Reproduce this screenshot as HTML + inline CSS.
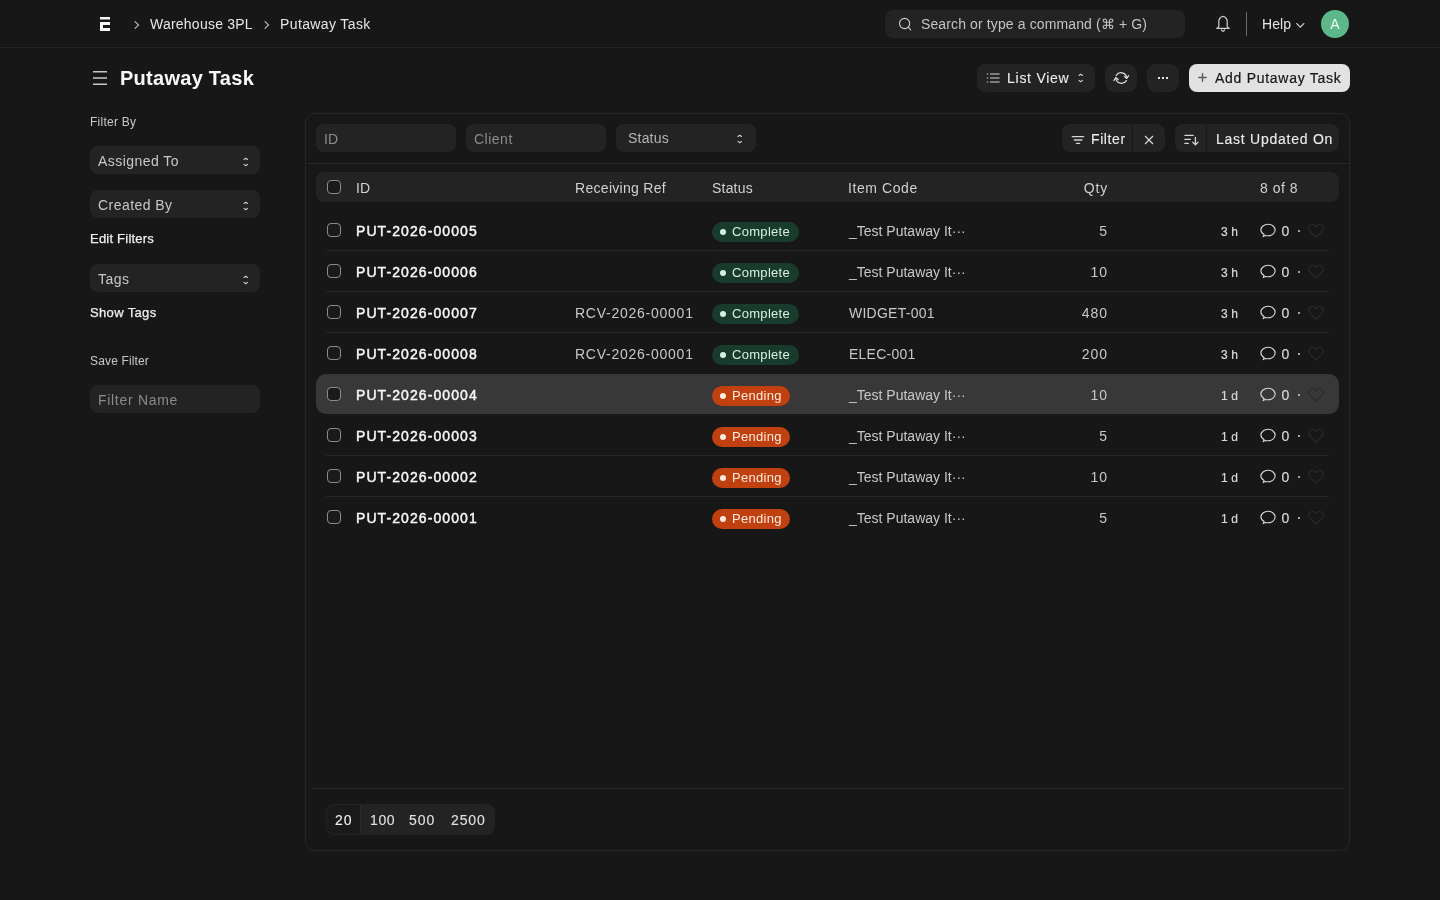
<!DOCTYPE html>
<html><head><meta charset="utf-8">
<style>
*{box-sizing:border-box;margin:0;padding:0}
html,body{width:1440px;height:900px;overflow:hidden;background:#171717;font-family:"Liberation Sans",sans-serif;color:#f0f0f0}
.a{position:absolute}
.t{position:absolute;white-space:nowrap;line-height:1}
svg{position:absolute;overflow:visible}
</style></head><body><div style="position:absolute;left:0;top:0;width:1440px;height:900px;will-change:transform;background:#171717">
<div class="a" style="left:0px;top:47px;width:1440px;height:1px;background:#242424;"></div>
<svg style="left:100px;top:17px" width="10" height="14" viewBox="0 0 10 14"><rect x="0" y="0" width="10" height="2.5" fill="#f5f5f5"/><path d="M0 5H10V8H3V11H10V14H0Z" fill="#f5f5f5"/></svg>
<svg style="left:134px;top:21px" width="6" height="8" viewBox="0 0 6 8"><path d="M1 0.6L4.6 4L1 7.4" stroke="#bdbdbd" stroke-width="1.1" fill="none" stroke-linecap="round"/></svg>
<div class="t" style="left:150px;top:17px;font-size:14px;color:#e6e6e6;letter-spacing:0.23px;">Warehouse 3PL</div>
<svg style="left:264px;top:21px" width="6" height="8" viewBox="0 0 6 8"><path d="M1 0.6L4.6 4L1 7.4" stroke="#bdbdbd" stroke-width="1.1" fill="none" stroke-linecap="round"/></svg>
<div class="t" style="left:280px;top:17px;font-size:14px;color:#e6e6e6;letter-spacing:0.38px;">Putaway Task</div>
<div class="a" style="left:885px;top:10px;width:300px;height:28px;background:#232323;border-radius:8px;"></div>
<svg style="left:898px;top:17px" width="14" height="14" viewBox="0 0 14 14"><circle cx="6.6" cy="6.5" r="5.1" stroke="#cccccc" stroke-width="1.1" fill="none"/><path d="M10.3 10.2L12.7 12.8" stroke="#cccccc" stroke-width="1.1" stroke-linecap="round"/></svg>
<div class="t" style="left:921px;top:17px;font-size:14px;color:#c4c4c4;letter-spacing:0.12px;">Search or type a command (⌘ + G)</div>
<svg style="left:1215px;top:15px" width="16" height="18" viewBox="0 0 16 18"><path d="M8 1.3C7.2 1.3 5.2 2.6 4.6 3.6C4 4.6 3.8 5.6 3.8 6.8V11.6L1.8 13.4H14.2L12.2 11.6V6.8C12.2 5.6 12 4.6 11.4 3.6C10.8 2.6 8.8 1.3 8 1.3Z" stroke="#cfcfcf" stroke-width="1.2" fill="none" stroke-linejoin="round"/><path d="M6.4 14.4C6.6 15.6 7.2 16.3 8 16.3C8.8 16.3 9.4 15.6 9.6 14.4" stroke="#cfcfcf" stroke-width="1.2" fill="none"/></svg>
<div class="a" style="left:1246px;top:12px;width:1px;height:24px;background:#6b6b6b;"></div>
<div class="t" style="left:1262px;top:17px;font-size:14px;color:#e6e6e6;letter-spacing:0.1px;">Help</div>
<svg style="left:1296px;top:22px" width="9" height="6" viewBox="0 0 9 6"><path d="M0.7 1.5L4.3 5.2L7.9 1.5" stroke="#c8c8c8" stroke-width="1.1" fill="none" stroke-linecap="round"/></svg>
<div class="a" style="left:1321px;top:10px;width:28px;height:28px;background:#5cb88a;border-radius:14px;"></div>
<div class="t" style="left:1321px;top:17px;width:28px;text-align:center;font-size:14px;color:#f2fff6">A</div>
<svg style="left:93px;top:71px" width="14" height="14" viewBox="0 0 14 14"><path d="M0 0.75H14M0 7H14M0 13.25H14" stroke="#c8c8c8" stroke-width="1.3"/></svg>
<div class="t" style="left:120px;top:68px;font-size:20px;color:#f8f8f8;font-weight:bold;letter-spacing:0.27px;">Putaway Task</div>
<div class="a" style="left:977px;top:64px;width:118px;height:28px;background:#232323;border-radius:8px;"></div>
<svg style="left:986px;top:73px" width="14" height="11" viewBox="0 0 14 11"><path d="M0.8 0.2H2.2V1.8H0.8ZM0.8 4.2H2.2V5.8H0.8ZM0.8 8.2H2.2V9.8H0.8Z" fill="#9a9a9a"/><path d="M4 1H13.6M4 5H13.6M4 9H13.6" stroke="#9a9a9a" stroke-width="1.6"/></svg>
<div class="t" style="left:1007px;top:71px;font-size:14px;color:#ededed;letter-spacing:0.74px;-webkit-text-stroke:0.1px #ededed;">List View</div>
<svg style="left:1078px;top:73px" width="6" height="10" viewBox="0 0 6 10"><path d="M1 2.5L2.75 1.2L4.5 2.5M1 7.4L2.75 8.7L4.5 7.4" stroke="#d0d0d0" stroke-width="1.1" fill="none" stroke-linecap="round" stroke-linejoin="round"/></svg>
<div class="a" style="left:1105px;top:64px;width:32px;height:28px;background:#232323;border-radius:9px;"></div>
<svg style="left:1108px;top:66px" width="28" height="24" viewBox="0 0 28 24"><path d="M8.2 9.4A5.8 5.8 0 0 1 18.7 11.2" stroke="#dedede" stroke-width="1.25" fill="none" stroke-linecap="round"/><path d="M16.4 10.4L18.8 12.4L20.7 9.5" stroke="#dedede" stroke-width="1.25" fill="none" stroke-linecap="round" stroke-linejoin="round"/><path d="M18.4 14.6A5.8 5.8 0 0 1 7.9 12.8" stroke="#dedede" stroke-width="1.25" fill="none" stroke-linecap="round"/><path d="M10.2 13.6L7.8 11.6L5.9 14.5" stroke="#dedede" stroke-width="1.25" fill="none" stroke-linecap="round" stroke-linejoin="round"/></svg>
<div class="a" style="left:1147px;top:64px;width:32px;height:28px;background:#232323;border-radius:9px;"></div>
<div class="a" style="left:1158px;top:77px;width:2px;height:2px;background:#e6e6e6;"></div>
<div class="a" style="left:1162px;top:77px;width:2px;height:2px;background:#e6e6e6;"></div>
<div class="a" style="left:1166px;top:77px;width:2px;height:2px;background:#e6e6e6;"></div>
<div class="a" style="left:1189px;top:64px;width:161px;height:28px;background:#e2e2e2;border-radius:8px;"></div>
<svg style="left:1198px;top:73px" width="9" height="9" viewBox="0 0 9 9"><path d="M4.5 0.8V8.2M0.8 4.5H8.2" stroke="#5a5a5a" stroke-width="1.4" stroke-linecap="round"/></svg>
<div class="t" style="left:1215px;top:71px;font-size:14px;color:#171717;letter-spacing:0.72px;-webkit-text-stroke:0.2px #171717;">Add Putaway Task</div>
<div class="t" style="left:90px;top:116px;font-size:12px;color:#c8c8c8;letter-spacing:0.25px;">Filter By</div>
<div class="a" style="left:90px;top:146px;width:170px;height:28px;background:#232323;border-radius:8px;"></div>
<div class="t" style="left:98px;top:154px;font-size:14px;color:#c8c8c8;letter-spacing:0.45px;">Assigned To</div>
<svg style="left:243px;top:157px" width="6" height="10" viewBox="0 0 6 10"><path d="M1 2.5L2.75 1.2L4.5 2.5M1 7.4L2.75 8.7L4.5 7.4" stroke="#d0d0d0" stroke-width="1.1" fill="none" stroke-linecap="round" stroke-linejoin="round"/></svg>
<div class="a" style="left:90px;top:190px;width:170px;height:28px;background:#232323;border-radius:8px;"></div>
<div class="t" style="left:98px;top:198px;font-size:14px;color:#c8c8c8;letter-spacing:0.45px;">Created By</div>
<svg style="left:243px;top:201px" width="6" height="10" viewBox="0 0 6 10"><path d="M1 2.5L2.75 1.2L4.5 2.5M1 7.4L2.75 8.7L4.5 7.4" stroke="#d0d0d0" stroke-width="1.1" fill="none" stroke-linecap="round" stroke-linejoin="round"/></svg>
<div class="a" style="left:90px;top:264px;width:170px;height:28px;background:#232323;border-radius:8px;"></div>
<div class="t" style="left:98px;top:272px;font-size:14px;color:#c8c8c8;letter-spacing:0.45px;">Tags</div>
<svg style="left:243px;top:275px" width="6" height="10" viewBox="0 0 6 10"><path d="M1 2.5L2.75 1.2L4.5 2.5M1 7.4L2.75 8.7L4.5 7.4" stroke="#d0d0d0" stroke-width="1.1" fill="none" stroke-linecap="round" stroke-linejoin="round"/></svg>
<div class="t" style="left:90px;top:232px;font-size:13px;color:#f0f0f0;letter-spacing:0.22px;-webkit-text-stroke:0.25px #f0f0f0;">Edit Filters</div>
<div class="t" style="left:90px;top:306px;font-size:13px;color:#f0f0f0;letter-spacing:0.35px;-webkit-text-stroke:0.25px #f0f0f0;">Show Tags</div>
<div class="t" style="left:90px;top:355px;font-size:12px;color:#c8c8c8;letter-spacing:0.15px;">Save Filter</div>
<div class="a" style="left:90px;top:385px;width:170px;height:28px;background:#232323;border-radius:8px;"></div>
<div class="t" style="left:98px;top:393px;font-size:14px;color:#8a8a8a;letter-spacing:0.7px;">Filter Name</div>
<div class="a" style="left:305px;top:113px;width:1045px;height:738px;border:1px solid #262626;border-radius:10px"></div>
<div class="a" style="left:316px;top:124px;width:140px;height:28px;background:#232323;border-radius:8px;"></div>
<div class="t" style="left:324px;top:132px;font-size:14px;color:#8c8c8c;">ID</div>
<div class="a" style="left:466px;top:124px;width:140px;height:28px;background:#232323;border-radius:8px;"></div>
<div class="t" style="left:474px;top:132px;font-size:14px;color:#8c8c8c;letter-spacing:0.5px;">Client</div>
<div class="a" style="left:616px;top:124px;width:140px;height:28px;background:#232323;border-radius:8px;"></div>
<div class="t" style="left:628px;top:131px;font-size:14px;color:#b4b4b4;letter-spacing:0.2px;">Status</div>
<svg style="left:737px;top:134px" width="6" height="10" viewBox="0 0 6 10"><path d="M1 2.5L2.75 1.2L4.5 2.5M1 7.4L2.75 8.7L4.5 7.4" stroke="#d0d0d0" stroke-width="1.1" fill="none" stroke-linecap="round" stroke-linejoin="round"/></svg>
<div class="a" style="left:1062px;top:124px;width:103px;height:28px;background:#232323;border-radius:8px;"></div>
<div class="a" style="left:1132px;top:124px;width:1px;height:28px;background:#171717;"></div>
<svg style="left:1071px;top:135px" width="14" height="10" viewBox="0 0 14 10"><path d="M1.25 1.6H12.65M3.25 5H10.95M5.45 8.4H8.55" stroke="#d4d4d4" stroke-width="1.3" stroke-linecap="round"/></svg>
<div class="t" style="left:1091px;top:132px;font-size:14px;color:#ededed;letter-spacing:0.6px;-webkit-text-stroke:0.12px #ededed;">Filter</div>
<svg style="left:1144px;top:135px" width="10" height="10" viewBox="0 0 10 10"><path d="M1 1L9 9M9 1L1 9" stroke="#dedede" stroke-width="1.1"/></svg>
<div class="a" style="left:1175px;top:124px;width:164px;height:28px;background:#232323;border-radius:8px;"></div>
<div class="a" style="left:1206px;top:124px;width:1px;height:28px;background:#171717;"></div>
<svg style="left:1184px;top:134px" width="16" height="12" viewBox="0 0 16 12"><path d="M0.85 1.3H9.25M0.85 5.4H6.35M0.85 9.4H4.25" stroke="#d4d4d4" stroke-width="1.3" stroke-linecap="round"/><path d="M11.4 3.3V10.6M8.7 8.1L11.4 10.8L14.1 8.1" stroke="#d4d4d4" stroke-width="1.3" fill="none" stroke-linecap="round" stroke-linejoin="round"/></svg>
<div class="t" style="left:1216px;top:132px;font-size:14px;color:#ededed;letter-spacing:0.75px;-webkit-text-stroke:0.12px #ededed;">Last Updated On</div>
<div class="a" style="left:306px;top:163px;width:1043px;height:1px;background:#262626;"></div>
<div class="a" style="left:316px;top:172px;width:1023px;height:30px;background:#232323;border-radius:8px;"></div>
<div class="a" style="left:327px;top:180px;width:14px;height:14px;border:1px solid #8c8c8c;border-radius:4px;background:#1a1a1a"></div>
<div class="t" style="left:356px;top:181px;font-size:14px;color:#d0d0d0;">ID</div>
<div class="t" style="left:575px;top:181px;font-size:14px;color:#d0d0d0;letter-spacing:0.3px;">Receiving Ref</div>
<div class="t" style="left:712px;top:181px;font-size:14px;color:#d0d0d0;letter-spacing:0.2px;">Status</div>
<div class="t" style="left:848px;top:181px;font-size:14px;color:#d0d0d0;letter-spacing:0.58px;">Item Code</div>
<div class="t" style="right:332px;top:181px;font-size:14px;color:#d0d0d0;letter-spacing:0.8px;text-align:right">Qty</div>
<div class="t" style="left:1260px;top:181px;font-size:14px;color:#d0d0d0;letter-spacing:0.5px;">8 of 8</div>
<svg style="left:1308px;top:181px" width="16" height="14" viewBox="0 0 16 14"><path d="M8 13.2L1.8 6.8C0.4 5.3 0.5 2.7 2.1 1.4C3.7 0.1 6 0.4 7.2 1.7L8 2.6L8.8 1.7C10 0.4 12.3 0.1 13.9 1.4C15.5 2.7 15.6 5.3 14.2 6.8Z" stroke="#282828" stroke-width="1.2" fill="none" stroke-linejoin="round"/></svg>
<div class="a" style="left:326px;top:250px;width:1003px;height:1px;background:#262626;"></div>
<div class="a" style="left:327px;top:223px;width:14px;height:14px;border:1px solid #8c8c8c;border-radius:4px;background:#1a1a1a"></div>
<div class="t" style="left:356px;top:224px;font-size:14px;color:#f8f8f8;letter-spacing:1.08px;-webkit-text-stroke:0.45px #f8f8f8;">PUT-2026-00005</div>
<div class="a" style="left:712px;top:222px;width:87px;height:20px;background:#193b2d;border-radius:10px;"></div>
<div class="a" style="left:720px;top:229px;width:6px;height:6px;background:#d8f0e0;border-radius:3px;"></div>
<div class="t" style="left:732px;top:225px;font-size:13px;color:#d8f0e0;letter-spacing:0.3px;">Complete</div>
<div class="t" style="left:849px;top:224px;font-size:14px;color:#c8c8c8;">_Test Putaway It···</div>
<div class="t" style="right:332px;top:224px;font-size:14px;color:#c8c8c8;letter-spacing:1.0px;text-align:right">5</div>
<div class="t" style="left:1221px;top:226px;font-size:12px;color:#d8d8d8;letter-spacing:0.1px;-webkit-text-stroke:0.2px #d8d8d8;">3 h</div>
<svg style="left:1260px;top:223px" width="16" height="15" viewBox="0 0 16 15"><path d="M3.2 13.6L4.1 11.4C2.1 10.5 0.9 9 0.9 7.1C0.9 3.8 4.1 1.3 8 1.3C11.9 1.3 15.1 3.8 15.1 7.1C15.1 10.3 11.9 12.8 8 12.8C7 12.8 6.1 12.7 5.2 12.4Z" stroke="#d8d8d8" stroke-width="1.1" fill="none" stroke-linejoin="round"/></svg>
<div class="t" style="left:1281.6px;top:224px;font-size:14px;color:#dcdcdc;letter-spacing:0.3px;-webkit-text-stroke:0.15px #dcdcdc;">0</div>
<div class="a" style="left:1298px;top:230px;width:2px;height:2px;background:#d0d0d0;border-radius:1px;"></div>
<svg style="left:1308px;top:224px" width="16" height="14" viewBox="0 0 16 14"><path d="M8 13.2L1.8 6.8C0.4 5.3 0.5 2.7 2.1 1.4C3.7 0.1 6 0.4 7.2 1.7L8 2.6L8.8 1.7C10 0.4 12.3 0.1 13.9 1.4C15.5 2.7 15.6 5.3 14.2 6.8Z" stroke="#2a2a2a" stroke-width="1.2" fill="none" stroke-linejoin="round"/></svg>
<div class="a" style="left:326px;top:291px;width:1003px;height:1px;background:#262626;"></div>
<div class="a" style="left:327px;top:264px;width:14px;height:14px;border:1px solid #8c8c8c;border-radius:4px;background:#1a1a1a"></div>
<div class="t" style="left:356px;top:265px;font-size:14px;color:#f8f8f8;letter-spacing:1.08px;-webkit-text-stroke:0.45px #f8f8f8;">PUT-2026-00006</div>
<div class="a" style="left:712px;top:263px;width:87px;height:20px;background:#193b2d;border-radius:10px;"></div>
<div class="a" style="left:720px;top:270px;width:6px;height:6px;background:#d8f0e0;border-radius:3px;"></div>
<div class="t" style="left:732px;top:266px;font-size:13px;color:#d8f0e0;letter-spacing:0.3px;">Complete</div>
<div class="t" style="left:849px;top:265px;font-size:14px;color:#c8c8c8;">_Test Putaway It···</div>
<div class="t" style="right:332px;top:265px;font-size:14px;color:#c8c8c8;letter-spacing:1.0px;text-align:right">10</div>
<div class="t" style="left:1221px;top:267px;font-size:12px;color:#d8d8d8;letter-spacing:0.1px;-webkit-text-stroke:0.2px #d8d8d8;">3 h</div>
<svg style="left:1260px;top:264px" width="16" height="15" viewBox="0 0 16 15"><path d="M3.2 13.6L4.1 11.4C2.1 10.5 0.9 9 0.9 7.1C0.9 3.8 4.1 1.3 8 1.3C11.9 1.3 15.1 3.8 15.1 7.1C15.1 10.3 11.9 12.8 8 12.8C7 12.8 6.1 12.7 5.2 12.4Z" stroke="#d8d8d8" stroke-width="1.1" fill="none" stroke-linejoin="round"/></svg>
<div class="t" style="left:1281.6px;top:265px;font-size:14px;color:#dcdcdc;letter-spacing:0.3px;-webkit-text-stroke:0.15px #dcdcdc;">0</div>
<div class="a" style="left:1298px;top:271px;width:2px;height:2px;background:#d0d0d0;border-radius:1px;"></div>
<svg style="left:1308px;top:265px" width="16" height="14" viewBox="0 0 16 14"><path d="M8 13.2L1.8 6.8C0.4 5.3 0.5 2.7 2.1 1.4C3.7 0.1 6 0.4 7.2 1.7L8 2.6L8.8 1.7C10 0.4 12.3 0.1 13.9 1.4C15.5 2.7 15.6 5.3 14.2 6.8Z" stroke="#2a2a2a" stroke-width="1.2" fill="none" stroke-linejoin="round"/></svg>
<div class="a" style="left:326px;top:332px;width:1003px;height:1px;background:#262626;"></div>
<div class="a" style="left:327px;top:305px;width:14px;height:14px;border:1px solid #8c8c8c;border-radius:4px;background:#1a1a1a"></div>
<div class="t" style="left:356px;top:306px;font-size:14px;color:#f8f8f8;letter-spacing:1.08px;-webkit-text-stroke:0.45px #f8f8f8;">PUT-2026-00007</div>
<div class="t" style="left:575px;top:306px;font-size:14px;color:#c8c8c8;letter-spacing:0.75px;">RCV-2026-00001</div>
<div class="a" style="left:712px;top:304px;width:87px;height:20px;background:#193b2d;border-radius:10px;"></div>
<div class="a" style="left:720px;top:311px;width:6px;height:6px;background:#d8f0e0;border-radius:3px;"></div>
<div class="t" style="left:732px;top:307px;font-size:13px;color:#d8f0e0;letter-spacing:0.3px;">Complete</div>
<div class="t" style="left:849px;top:306px;font-size:14px;color:#c8c8c8;letter-spacing:0.25px;">WIDGET-001</div>
<div class="t" style="right:332px;top:306px;font-size:14px;color:#c8c8c8;letter-spacing:1.0px;text-align:right">480</div>
<div class="t" style="left:1221px;top:308px;font-size:12px;color:#d8d8d8;letter-spacing:0.1px;-webkit-text-stroke:0.2px #d8d8d8;">3 h</div>
<svg style="left:1260px;top:305px" width="16" height="15" viewBox="0 0 16 15"><path d="M3.2 13.6L4.1 11.4C2.1 10.5 0.9 9 0.9 7.1C0.9 3.8 4.1 1.3 8 1.3C11.9 1.3 15.1 3.8 15.1 7.1C15.1 10.3 11.9 12.8 8 12.8C7 12.8 6.1 12.7 5.2 12.4Z" stroke="#d8d8d8" stroke-width="1.1" fill="none" stroke-linejoin="round"/></svg>
<div class="t" style="left:1281.6px;top:306px;font-size:14px;color:#dcdcdc;letter-spacing:0.3px;-webkit-text-stroke:0.15px #dcdcdc;">0</div>
<div class="a" style="left:1298px;top:312px;width:2px;height:2px;background:#d0d0d0;border-radius:1px;"></div>
<svg style="left:1308px;top:306px" width="16" height="14" viewBox="0 0 16 14"><path d="M8 13.2L1.8 6.8C0.4 5.3 0.5 2.7 2.1 1.4C3.7 0.1 6 0.4 7.2 1.7L8 2.6L8.8 1.7C10 0.4 12.3 0.1 13.9 1.4C15.5 2.7 15.6 5.3 14.2 6.8Z" stroke="#2a2a2a" stroke-width="1.2" fill="none" stroke-linejoin="round"/></svg>
<div class="a" style="left:327px;top:346px;width:14px;height:14px;border:1px solid #8c8c8c;border-radius:4px;background:#1a1a1a"></div>
<div class="t" style="left:356px;top:347px;font-size:14px;color:#f8f8f8;letter-spacing:1.08px;-webkit-text-stroke:0.45px #f8f8f8;">PUT-2026-00008</div>
<div class="t" style="left:575px;top:347px;font-size:14px;color:#c8c8c8;letter-spacing:0.75px;">RCV-2026-00001</div>
<div class="a" style="left:712px;top:345px;width:87px;height:20px;background:#193b2d;border-radius:10px;"></div>
<div class="a" style="left:720px;top:352px;width:6px;height:6px;background:#d8f0e0;border-radius:3px;"></div>
<div class="t" style="left:732px;top:348px;font-size:13px;color:#d8f0e0;letter-spacing:0.3px;">Complete</div>
<div class="t" style="left:849px;top:347px;font-size:14px;color:#c8c8c8;letter-spacing:0.25px;">ELEC-001</div>
<div class="t" style="right:332px;top:347px;font-size:14px;color:#c8c8c8;letter-spacing:1.0px;text-align:right">200</div>
<div class="t" style="left:1221px;top:349px;font-size:12px;color:#d8d8d8;letter-spacing:0.1px;-webkit-text-stroke:0.2px #d8d8d8;">3 h</div>
<svg style="left:1260px;top:346px" width="16" height="15" viewBox="0 0 16 15"><path d="M3.2 13.6L4.1 11.4C2.1 10.5 0.9 9 0.9 7.1C0.9 3.8 4.1 1.3 8 1.3C11.9 1.3 15.1 3.8 15.1 7.1C15.1 10.3 11.9 12.8 8 12.8C7 12.8 6.1 12.7 5.2 12.4Z" stroke="#d8d8d8" stroke-width="1.1" fill="none" stroke-linejoin="round"/></svg>
<div class="t" style="left:1281.6px;top:347px;font-size:14px;color:#dcdcdc;letter-spacing:0.3px;-webkit-text-stroke:0.15px #dcdcdc;">0</div>
<div class="a" style="left:1298px;top:353px;width:2px;height:2px;background:#d0d0d0;border-radius:1px;"></div>
<svg style="left:1308px;top:347px" width="16" height="14" viewBox="0 0 16 14"><path d="M8 13.2L1.8 6.8C0.4 5.3 0.5 2.7 2.1 1.4C3.7 0.1 6 0.4 7.2 1.7L8 2.6L8.8 1.7C10 0.4 12.3 0.1 13.9 1.4C15.5 2.7 15.6 5.3 14.2 6.8Z" stroke="#2a2a2a" stroke-width="1.2" fill="none" stroke-linejoin="round"/></svg>
<div class="a" style="left:316px;top:374px;width:1023px;height:40px;background:#383838;border-radius:10px;"></div>
<div class="a" style="left:327px;top:387px;width:14px;height:14px;border:1px solid #8c8c8c;border-radius:4px;background:#1a1a1a"></div>
<div class="t" style="left:356px;top:388px;font-size:14px;color:#f8f8f8;letter-spacing:1.08px;-webkit-text-stroke:0.45px #f8f8f8;">PUT-2026-00004</div>
<div class="a" style="left:712px;top:386px;width:78px;height:20px;background:#c0400f;border-radius:10px;"></div>
<div class="a" style="left:720px;top:393px;width:6px;height:6px;background:#fdebe0;border-radius:3px;"></div>
<div class="t" style="left:732px;top:389px;font-size:13px;color:#fdebe0;letter-spacing:0.3px;">Pending</div>
<div class="t" style="left:849px;top:388px;font-size:14px;color:#c8c8c8;">_Test Putaway It···</div>
<div class="t" style="right:332px;top:388px;font-size:14px;color:#c8c8c8;letter-spacing:1.0px;text-align:right">10</div>
<div class="t" style="left:1221px;top:390px;font-size:12px;color:#d8d8d8;letter-spacing:0.1px;-webkit-text-stroke:0.2px #d8d8d8;">1 d</div>
<svg style="left:1260px;top:387px" width="16" height="15" viewBox="0 0 16 15"><path d="M3.2 13.6L4.1 11.4C2.1 10.5 0.9 9 0.9 7.1C0.9 3.8 4.1 1.3 8 1.3C11.9 1.3 15.1 3.8 15.1 7.1C15.1 10.3 11.9 12.8 8 12.8C7 12.8 6.1 12.7 5.2 12.4Z" stroke="#d8d8d8" stroke-width="1.1" fill="none" stroke-linejoin="round"/></svg>
<div class="t" style="left:1281.6px;top:388px;font-size:14px;color:#dcdcdc;letter-spacing:0.3px;-webkit-text-stroke:0.15px #dcdcdc;">0</div>
<div class="a" style="left:1298px;top:394px;width:2px;height:2px;background:#d0d0d0;border-radius:1px;"></div>
<svg style="left:1308px;top:388px" width="16" height="14" viewBox="0 0 16 14"><path d="M8 13.2L1.8 6.8C0.4 5.3 0.5 2.7 2.1 1.4C3.7 0.1 6 0.4 7.2 1.7L8 2.6L8.8 1.7C10 0.4 12.3 0.1 13.9 1.4C15.5 2.7 15.6 5.3 14.2 6.8Z" stroke="#2a2a2a" stroke-width="1.2" fill="none" stroke-linejoin="round"/></svg>
<div class="a" style="left:326px;top:455px;width:1003px;height:1px;background:#262626;"></div>
<div class="a" style="left:327px;top:428px;width:14px;height:14px;border:1px solid #8c8c8c;border-radius:4px;background:#1a1a1a"></div>
<div class="t" style="left:356px;top:429px;font-size:14px;color:#f8f8f8;letter-spacing:1.08px;-webkit-text-stroke:0.45px #f8f8f8;">PUT-2026-00003</div>
<div class="a" style="left:712px;top:427px;width:78px;height:20px;background:#c0400f;border-radius:10px;"></div>
<div class="a" style="left:720px;top:434px;width:6px;height:6px;background:#fdebe0;border-radius:3px;"></div>
<div class="t" style="left:732px;top:430px;font-size:13px;color:#fdebe0;letter-spacing:0.3px;">Pending</div>
<div class="t" style="left:849px;top:429px;font-size:14px;color:#c8c8c8;">_Test Putaway It···</div>
<div class="t" style="right:332px;top:429px;font-size:14px;color:#c8c8c8;letter-spacing:1.0px;text-align:right">5</div>
<div class="t" style="left:1221px;top:431px;font-size:12px;color:#d8d8d8;letter-spacing:0.1px;-webkit-text-stroke:0.2px #d8d8d8;">1 d</div>
<svg style="left:1260px;top:428px" width="16" height="15" viewBox="0 0 16 15"><path d="M3.2 13.6L4.1 11.4C2.1 10.5 0.9 9 0.9 7.1C0.9 3.8 4.1 1.3 8 1.3C11.9 1.3 15.1 3.8 15.1 7.1C15.1 10.3 11.9 12.8 8 12.8C7 12.8 6.1 12.7 5.2 12.4Z" stroke="#d8d8d8" stroke-width="1.1" fill="none" stroke-linejoin="round"/></svg>
<div class="t" style="left:1281.6px;top:429px;font-size:14px;color:#dcdcdc;letter-spacing:0.3px;-webkit-text-stroke:0.15px #dcdcdc;">0</div>
<div class="a" style="left:1298px;top:435px;width:2px;height:2px;background:#d0d0d0;border-radius:1px;"></div>
<svg style="left:1308px;top:429px" width="16" height="14" viewBox="0 0 16 14"><path d="M8 13.2L1.8 6.8C0.4 5.3 0.5 2.7 2.1 1.4C3.7 0.1 6 0.4 7.2 1.7L8 2.6L8.8 1.7C10 0.4 12.3 0.1 13.9 1.4C15.5 2.7 15.6 5.3 14.2 6.8Z" stroke="#2a2a2a" stroke-width="1.2" fill="none" stroke-linejoin="round"/></svg>
<div class="a" style="left:326px;top:496px;width:1003px;height:1px;background:#262626;"></div>
<div class="a" style="left:327px;top:469px;width:14px;height:14px;border:1px solid #8c8c8c;border-radius:4px;background:#1a1a1a"></div>
<div class="t" style="left:356px;top:470px;font-size:14px;color:#f8f8f8;letter-spacing:1.08px;-webkit-text-stroke:0.45px #f8f8f8;">PUT-2026-00002</div>
<div class="a" style="left:712px;top:468px;width:78px;height:20px;background:#c0400f;border-radius:10px;"></div>
<div class="a" style="left:720px;top:475px;width:6px;height:6px;background:#fdebe0;border-radius:3px;"></div>
<div class="t" style="left:732px;top:471px;font-size:13px;color:#fdebe0;letter-spacing:0.3px;">Pending</div>
<div class="t" style="left:849px;top:470px;font-size:14px;color:#c8c8c8;">_Test Putaway It···</div>
<div class="t" style="right:332px;top:470px;font-size:14px;color:#c8c8c8;letter-spacing:1.0px;text-align:right">10</div>
<div class="t" style="left:1221px;top:472px;font-size:12px;color:#d8d8d8;letter-spacing:0.1px;-webkit-text-stroke:0.2px #d8d8d8;">1 d</div>
<svg style="left:1260px;top:469px" width="16" height="15" viewBox="0 0 16 15"><path d="M3.2 13.6L4.1 11.4C2.1 10.5 0.9 9 0.9 7.1C0.9 3.8 4.1 1.3 8 1.3C11.9 1.3 15.1 3.8 15.1 7.1C15.1 10.3 11.9 12.8 8 12.8C7 12.8 6.1 12.7 5.2 12.4Z" stroke="#d8d8d8" stroke-width="1.1" fill="none" stroke-linejoin="round"/></svg>
<div class="t" style="left:1281.6px;top:470px;font-size:14px;color:#dcdcdc;letter-spacing:0.3px;-webkit-text-stroke:0.15px #dcdcdc;">0</div>
<div class="a" style="left:1298px;top:476px;width:2px;height:2px;background:#d0d0d0;border-radius:1px;"></div>
<svg style="left:1308px;top:470px" width="16" height="14" viewBox="0 0 16 14"><path d="M8 13.2L1.8 6.8C0.4 5.3 0.5 2.7 2.1 1.4C3.7 0.1 6 0.4 7.2 1.7L8 2.6L8.8 1.7C10 0.4 12.3 0.1 13.9 1.4C15.5 2.7 15.6 5.3 14.2 6.8Z" stroke="#2a2a2a" stroke-width="1.2" fill="none" stroke-linejoin="round"/></svg>
<div class="a" style="left:327px;top:510px;width:14px;height:14px;border:1px solid #8c8c8c;border-radius:4px;background:#1a1a1a"></div>
<div class="t" style="left:356px;top:511px;font-size:14px;color:#f8f8f8;letter-spacing:1.08px;-webkit-text-stroke:0.45px #f8f8f8;">PUT-2026-00001</div>
<div class="a" style="left:712px;top:509px;width:78px;height:20px;background:#c0400f;border-radius:10px;"></div>
<div class="a" style="left:720px;top:516px;width:6px;height:6px;background:#fdebe0;border-radius:3px;"></div>
<div class="t" style="left:732px;top:512px;font-size:13px;color:#fdebe0;letter-spacing:0.3px;">Pending</div>
<div class="t" style="left:849px;top:511px;font-size:14px;color:#c8c8c8;">_Test Putaway It···</div>
<div class="t" style="right:332px;top:511px;font-size:14px;color:#c8c8c8;letter-spacing:1.0px;text-align:right">5</div>
<div class="t" style="left:1221px;top:513px;font-size:12px;color:#d8d8d8;letter-spacing:0.1px;-webkit-text-stroke:0.2px #d8d8d8;">1 d</div>
<svg style="left:1260px;top:510px" width="16" height="15" viewBox="0 0 16 15"><path d="M3.2 13.6L4.1 11.4C2.1 10.5 0.9 9 0.9 7.1C0.9 3.8 4.1 1.3 8 1.3C11.9 1.3 15.1 3.8 15.1 7.1C15.1 10.3 11.9 12.8 8 12.8C7 12.8 6.1 12.7 5.2 12.4Z" stroke="#d8d8d8" stroke-width="1.1" fill="none" stroke-linejoin="round"/></svg>
<div class="t" style="left:1281.6px;top:511px;font-size:14px;color:#dcdcdc;letter-spacing:0.3px;-webkit-text-stroke:0.15px #dcdcdc;">0</div>
<div class="a" style="left:1298px;top:517px;width:2px;height:2px;background:#d0d0d0;border-radius:1px;"></div>
<svg style="left:1308px;top:511px" width="16" height="14" viewBox="0 0 16 14"><path d="M8 13.2L1.8 6.8C0.4 5.3 0.5 2.7 2.1 1.4C3.7 0.1 6 0.4 7.2 1.7L8 2.6L8.8 1.7C10 0.4 12.3 0.1 13.9 1.4C15.5 2.7 15.6 5.3 14.2 6.8Z" stroke="#2a2a2a" stroke-width="1.2" fill="none" stroke-linejoin="round"/></svg>
<div class="a" style="left:311px;top:788px;width:1033px;height:1px;background:#262626;"></div>
<div class="a" style="left:326px;top:804px;width:169px;height:31px;background:#232323;border-radius:8px"></div>
<div class="a" style="left:326px;top:804px;width:35px;height:31px;background:#1a1a1a;border:1px solid #232323;border-radius:8px 0 0 8px"></div>
<div class="t" style="left:335px;top:813px;font-size:14px;color:#f0f0f0;letter-spacing:1.0px;-webkit-text-stroke:0.12px #f0f0f0;">20</div>
<div class="a" style="left:360px;top:805px;width:1px;height:29px;background:#2c2c2c;"></div>
<div class="t" style="left:370px;top:813px;font-size:14px;color:#e0e0e0;letter-spacing:0.6px;-webkit-text-stroke:0.12px #e0e0e0;">100</div>
<div class="t" style="left:409px;top:813px;font-size:14px;color:#e0e0e0;letter-spacing:1.0px;-webkit-text-stroke:0.12px #e0e0e0;">500</div>
<div class="t" style="left:451px;top:813px;font-size:14px;color:#e0e0e0;letter-spacing:0.9px;-webkit-text-stroke:0.12px #e0e0e0;">2500</div>
</div></body></html>
